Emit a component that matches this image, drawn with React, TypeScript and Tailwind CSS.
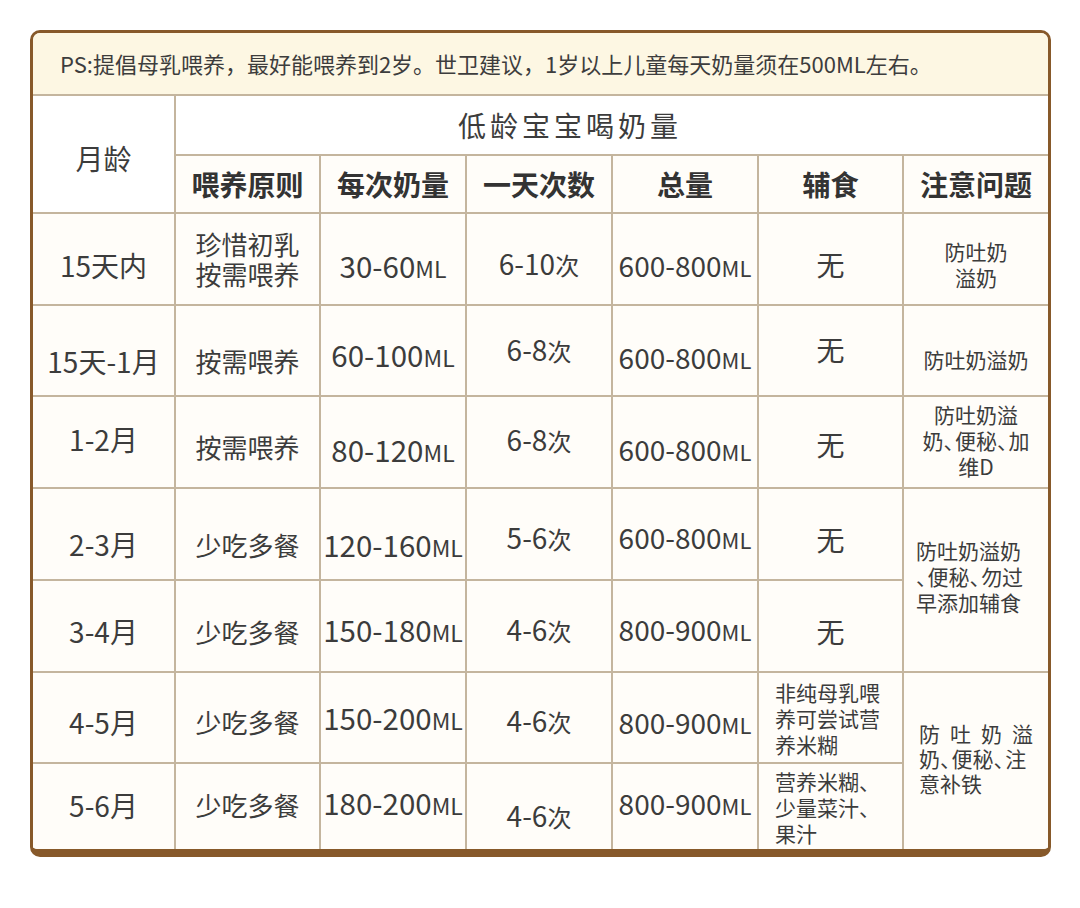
import type { ReactNode } from "react";

// vertical nudge per cell, taken from the picture (px, + = down)
const SHIFT: Record<number, string> = {
  [-4]: "pb-[8px]",
  [-3]: "pb-[6px]",
  [-2]: "pb-[4px]",
  0: "",
  2: "pt-[4px]",
  3: "pt-[6px]",
  4: "pt-[8px]",
  5: "pt-[10px]",
  6: "pt-[12px]",
  7: "pt-[14px]",
  8: "pt-[16px]",
  10: "pt-[20px]",
};

const cellBase = "border-2 border-[#c4b59e] align-middle text-center p-0 bg-[#fffdf9]";

function Dun() {
  return <span className="mr-[-0.45em]">、</span>;
}

function Ml({ n, big = false }: { n: string; big?: boolean }) {
  return (
    <span className={`whitespace-nowrap ${big ? "text-[29.5px]" : "text-[28px]"}`}>
      {n}
      <span className={big ? "text-[23px]" : "text-[22px]"}>ML</span>
    </span>
  );
}

function Ci({ n }: { n: string }) {
  return (
    <span className="whitespace-nowrap text-[28px]">
      {n}
      <span className="text-[24px]">次</span>
    </span>
  );
}

function Lines({ items, className = "" }: { items: ReactNode[]; className?: string }) {
  return (
    <div className={`text-[21px] leading-[26px] ${className}`}>
      {items.map((l, i) => (
        <div key={i} className="whitespace-nowrap">{l}</div>
      ))}
    </div>
  );
}

type Row = {
  h: string;
  age: string;
  principle: ReactNode;
  per: string;
  times: string;
  total: string;
  food: ReactNode;
  note?: ReactNode;
  noteSpan?: number;
  noteShift?: number;
  shift: number[];
};

const ROWS: Row[] = [
  {
    h: "h-[92px]",
    age: "15天内",
    principle: <div className="text-[26px] leading-[30px]"><div>珍惜初乳</div><div>按需喂养</div></div>,
    per: "30-60",
    times: "6-10",
    total: "600-800",
    food: <span className="text-[28px]">无</span>,
    note: <Lines items={["防吐奶", "溢奶"]} className="leading-[24px]" />,
    noteShift: 5,
    shift: [6, 0, 6, 4, 6, 5],
  },
  {
    h: "h-[91px]",
    age: "15天-1月",
    principle: <span className="text-[26px]">按需喂养</span>,
    per: "60-100",
    times: "6-8",
    total: "600-800",
    food: <span className="text-[28px]">无</span>,
    note: <Lines items={["防吐奶溢奶"]} />,
    noteShift: 8,
    shift: [10, 10, 4, -2, 6, -2],
  },
  {
    h: "h-[92px]",
    age: "1-2月",
    principle: <span className="text-[26px]">按需喂养</span>,
    per: "80-120",
    times: "6-8",
    total: "600-800",
    food: <span className="text-[28px]">无</span>,
    note: <Lines items={["防吐奶溢", <>奶<Dun />便秘<Dun />加</>, "维D"]} />,
    noteShift: -2,
    shift: [-3, 4, 7, -3, 7, 2],
  },
  {
    h: "h-[92px]",
    age: "2-3月",
    principle: <span className="text-[26px]">少吃多餐</span>,
    per: "120-160",
    times: "5-6",
    total: "600-800",
    food: <span className="text-[28px]">无</span>,
    note: (
      <Lines
        className="text-left pl-[12px]"
        items={["防吐奶溢奶", <><Dun />便秘<Dun />勿过</>, "早添加辅食"]}
      />
    ),
    noteSpan: 2,
    noteShift: -4,
    shift: [10, 10, 10, 3, 3, 5],
  },
  {
    h: "h-[92px]",
    age: "3-4月",
    principle: <span className="text-[26px]">少吃多餐</span>,
    per: "150-180",
    times: "4-6",
    total: "800-900",
    food: <span className="text-[28px]">无</span>,
    shift: [5, 5, 3, 3, 3, 5],
  },
  {
    h: "h-[91px]",
    age: "4-5月",
    principle: <span className="text-[26px]">少吃多餐</span>,
    per: "150-200",
    times: "4-6",
    total: "800-900",
    food: <Lines className="text-left pl-[16px]" items={["非纯母乳喂", "养可尝试营", "养米糊"]} />,
    note: (
      <div className="pl-[15px] text-left text-[21px] leading-[25px]">
        <div className="flex w-[114px] justify-between">
          <span>防</span><span>吐</span><span>奶</span><span>溢</span>
        </div>
        <div className="whitespace-nowrap">奶<Dun />便秘<Dun />注</div>
        <div>意补铁</div>
      </div>
    ),
    noteSpan: 2,
    noteShift: -3,
    shift: [4, 4, 0, 2, 4, 0],
  },
  {
    h: "h-[86px]",
    age: "5-6月",
    principle: <span className="text-[26px]">少吃多餐</span>,
    per: "180-200",
    times: "4-6",
    total: "800-900",
    food: <Lines className="text-left pl-[16px]" items={["营养米糊、", "少量菜汁、", "果汁"]} />,
    shift: [-2, -2, -4, 8, -4, 0],
  },
];

const HEADS = ["喂养原则", "每次奶量", "一天次数", "总量", "辅食", "注意问题"];

export default function App() {
  return (
    <div className="min-h-[908px] bg-white pt-[30px] font-['Noto_Sans_CJK_SC','Noto_Sans',sans-serif] text-[#3c3c3c]">
      <div className="ml-[30px] w-[1021px] overflow-hidden rounded-[10px] border-x-[3px] border-t-[3px] border-b-[8px] border-[#87592a] bg-[#fffdf9]">
        <div className="flex h-[63px] items-center border-b-2 border-[#c4b59e] bg-[#fdf7e3] pl-[27px] text-[22px] text-[#3d3d3d]">
          PS:提倡母乳喂养，最好能喂养到2岁。世卫建议，1岁以上儿童每天奶量须在500ML左右。
        </div>
        <table className="w-[1015px] table-fixed border-collapse border-hidden">
          <colgroup>
            <col className="w-[142px]" />
            <col className="w-[145px]" />
            <col className="w-[146px]" />
            <col className="w-[146px]" />
            <col className="w-[146px]" />
            <col className="w-[145px]" />
            <col className="w-[145px]" />
          </colgroup>
          <tbody>
            <tr className="h-[59px]">
              <td rowSpan={2} className={`${cellBase} bg-white pt-[8px] text-[28px]`}>月龄</td>
              <td colSpan={6} className={`${cellBase} bg-white pr-[84px] text-[28px] tracking-[4px]`}>
                低龄宝宝喝奶量
              </td>
            </tr>
            <tr className="h-[58px]">
              {HEADS.map((h) => (
                <td key={h} className={`${cellBase} bg-[#fcf5de] text-[28px] font-bold text-[#333]`}>
                  {h}
                </td>
              ))}
            </tr>
            {ROWS.map((r) => (
              <tr key={r.age} className={r.h}>
                <td className={`${cellBase} text-[28px] whitespace-nowrap ${SHIFT[r.shift[0]]}`}>{r.age}</td>
                <td className={`${cellBase} ${SHIFT[r.shift[1]]}`}>{r.principle}</td>
                <td className={`${cellBase} ${SHIFT[r.shift[2]]}`}><Ml n={r.per} big /></td>
                <td className={`${cellBase} ${SHIFT[r.shift[3]]}`}><Ci n={r.times} /></td>
                <td className={`${cellBase} ${SHIFT[r.shift[4]]}`}><Ml n={r.total} /></td>
                <td className={`${cellBase} ${SHIFT[r.shift[5]]}`}>{r.food}</td>
                {r.note && (
                  <td rowSpan={r.noteSpan ?? 1} className={`${cellBase} ${SHIFT[r.noteShift ?? 0]}`}>
                    {r.note}
                  </td>
                )}
              </tr>
            ))}
          </tbody>
        </table>
      </div>
    </div>
  );
}
